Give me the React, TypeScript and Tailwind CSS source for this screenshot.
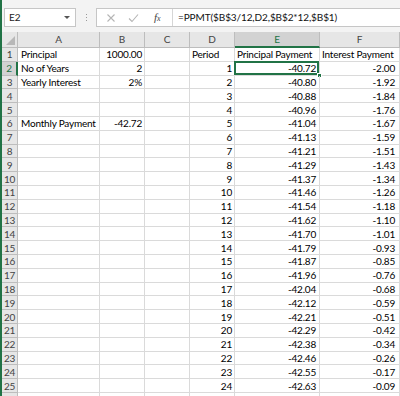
import React from "react";

type Row = { a?: string; b?: string; d?: string; e?: string; f?: string };

const payments: [string, string][] = [
  ["-40.72", "-2.00"],
  ["-40.80", "-1.92"],
  ["-40.88", "-1.84"],
  ["-40.96", "-1.76"],
  ["-41.04", "-1.67"],
  ["-41.13", "-1.59"],
  ["-41.21", "-1.51"],
  ["-41.29", "-1.43"],
  ["-41.37", "-1.34"],
  ["-41.46", "-1.26"],
  ["-41.54", "-1.18"],
  ["-41.62", "-1.10"],
  ["-41.70", "-1.01"],
  ["-41.79", "-0.93"],
  ["-41.87", "-0.85"],
  ["-41.96", "-0.76"],
  ["-42.04", "-0.68"],
  ["-42.12", "-0.59"],
  ["-42.21", "-0.51"],
  ["-42.29", "-0.42"],
  ["-42.38", "-0.34"],
  ["-42.46", "-0.26"],
  ["-42.55", "-0.17"],
  ["-42.63", "-0.09"],
];

const rows: Row[] = [
  { a: "Principal", b: "1000.00", d: "Period", e: "Principal Payment", f: "Interest Payment" },
  ...payments.map(([e, f], i) => ({ d: String(i + 1), e, f })),
];
rows[1].a = "No of Years";
rows[1].b = "2";
rows[2].a = "Yearly Interest";
rows[2].b = "2%";
rows[5].a = "Monthly Payment";
rows[5].b = "-42.72";

const cols = ["A", "B", "C", "D", "E", "F"];

const Toolbar = () => (
  <div className="flex items-start h-[32px] bg-[#f3f3f3] pt-[8px] pl-[2px]">
    {/* name box */}
    <div className="relative w-[72px] h-[19px] bg-white border border-[#c6c6c6] flex items-center pl-[4px] text-[10px] text-[#222]">
      E2
      <span className="absolute right-[5px] top-[7px] w-0 h-0 border-l-[3px] border-r-[3px] border-t-[3px] border-l-transparent border-r-transparent border-t-[#555]" />
    </div>
    {/* grip dots */}
    <div className="w-[20px] h-[19px] flex flex-col items-center justify-center gap-[2px]">
      <span className="w-[1px] h-[1px] bg-[#999]" />
      <span className="w-[1px] h-[1px] bg-[#999]" />
      <span className="w-[1px] h-[1px] bg-[#999]" />
    </div>
    {/* formula bar */}
    <div className="flex-1 h-[19px] bg-white border border-[#c6c6c6] border-r-0 flex items-center">
      <div className="w-[76px] h-full flex items-center border-r border-[#d6d6d6]">
        <svg width="10" height="10" viewBox="0 0 10 10" className="ml-[9px]">
          <path d="M1.5 1.5 L8.5 8.5 M8.5 1.5 L1.5 8.5" stroke="#b5b5b5" strokeWidth="1.1" fill="none" />
        </svg>
        <svg width="11" height="10" viewBox="0 0 11 10" className="ml-[12px]">
          <path d="M1 5.5 L4 8.5 L10 1.5" stroke="#b5b5b5" strokeWidth="1.1" fill="none" />
        </svg>
        <span className="ml-[15px] font-['Liberation_Serif',serif] italic text-[11px] text-[#444] leading-none">
          f<span className="text-[8px]">x</span>
        </span>
      </div>
      <span className="pl-[5px] text-[10px] text-[#111] whitespace-nowrap tracking-[-0.1px]">=PPMT($B$3/12,D2,$B$2*12,$B$1)</span>
    </div>
  </div>
);

const App: React.FC = () => {
  return (
    <div className="w-[400px] h-[396px] overflow-hidden bg-white border-l-2 border-[#217346] font-['Lato',sans-serif] text-[10px] text-[#000]">
      <Toolbar />
      <div className="grid grid-cols-[16px_82px_45px_45px_45px_85px_80px] grid-rows-[16px_repeat(26,13.8px)] tracking-[-0.2px]">
        {/* header row */}
        <div className="relative bg-[#e6e6e6] border-r border-b border-[#bdbdbd]">
          <svg width="9" height="9" viewBox="0 0 9 9" className="absolute right-[2px] bottom-[2px]">
            <path d="M9 0 L9 9 L0 9 Z" fill="#b8b8b8" />
          </svg>
        </div>
        {cols.map(c => (
          <div
            key={c}
            className={
              c === "E"
                ? "flex items-center justify-center bg-[#d2d2d2] border-r border-[#bdbdbd] border-b-2 border-b-[#217346] text-[#217346] text-[10px]"
                : "flex items-center justify-center bg-[#e6e6e6] border-r border-b border-[#bdbdbd] text-[#444] text-[10px]"
            }
          >
            {c}
          </div>
        ))}

        {rows.map((r, i) => {
          const sel = i === 1;
          return (
            <React.Fragment key={i}>
              <div
                className={
                  sel
                    ? "flex items-center justify-center bg-[#d2d2d2] border-r-2 border-r-[#217346] border-b border-[#bdbdbd] text-[#217346] text-[10px] leading-none"
                    : "flex items-center justify-center bg-[#e6e6e6] border-r border-b border-[#bdbdbd] text-[#444] text-[10px] leading-none"
                }
              >
                {i + 1}
              </div>
              <div className="flex items-center pl-[3px] border-r border-b border-[#dadada] whitespace-nowrap leading-none">{r.a}</div>
              <div className="flex items-center justify-end pr-[2px] border-r border-b border-[#dadada] leading-none">{r.b}</div>
              <div className="border-r border-b border-[#dadada]" />
              <div className="flex items-center justify-end pr-[2px] border-r border-b border-[#dadada] leading-none whitespace-nowrap">
                {r.d === "Period" ? <span className="mr-auto pl-[2px]">Period</span> : r.d}
              </div>
              <div
                className={`relative flex items-center border-r border-b border-[#dadada] leading-none whitespace-nowrap ${
                  i === 0 ? "pl-[2px]" : "justify-end pr-[3px]"
                }`}
              >
                {r.e}
                {sel && (
                  <>
                    <span className="absolute -left-[1px] -top-[1px] right-0 bottom-0 border-2 border-[#217346] pointer-events-none" />
                    <span className="absolute -right-[3px] -bottom-[3px] w-[5px] h-[5px] bg-[#217346] border border-white" />
                  </>
                )}
              </div>
              <div
                className={`flex items-center border-r border-b border-[#dadada] leading-none whitespace-nowrap ${
                  i === 0 ? "pl-[2px]" : "justify-end pr-[4px]"
                }`}
              >
                {r.f}
              </div>
            </React.Fragment>
          );
        })}
        {/* partial row 26 below the fold */}
        <div className="bg-[#e6e6e6] border-r border-b border-[#bdbdbd]" />
        <div className="border-r border-b border-[#dadada]" />
        <div className="border-r border-b border-[#dadada]" />
        <div className="border-r border-b border-[#dadada]" />
        <div className="border-r border-b border-[#dadada]" />
        <div className="border-r border-b border-[#dadada]" />
        <div className="border-r border-b border-[#dadada]" />
      </div>
    </div>
  );
};

export default App;
